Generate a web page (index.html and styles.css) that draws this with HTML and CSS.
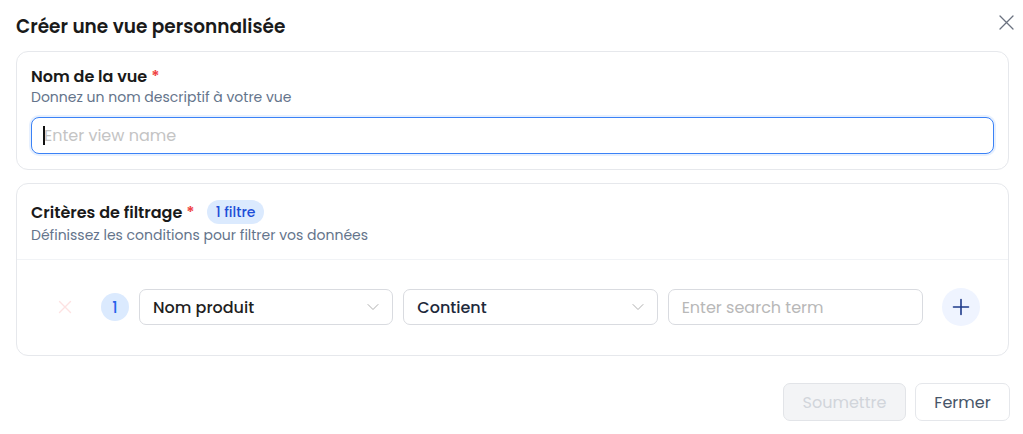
FILE: index.html
```html
<!DOCTYPE html>
<html lang="fr">
<head>
    <meta charset="UTF-8">
    <meta name="viewport" content="width=device-width, initial-scale=1.0">
    <title>Créer une vue personnalisée</title>
    <link rel="stylesheet" href="styles.css">
</head>
<body>
    <div class="dialog">
        <div class="dialog-header">
            <h2>Créer une vue personnalisée</h2>
            <button class="close-btn" aria-label="Fermer">
                <svg width="15" height="15" viewBox="0 0 15 15" fill="none" stroke="#6b7280" stroke-width="1.3" stroke-linecap="round">
                    <path d="M1 1L14 14M14 1L1 14"/>
                </svg>
            </button>
        </div>

        <div class="card">
            <div class="card-head">
                <div class="label">Nom de la vue <span class="req">*</span></div>
                <div class="hint">Donnez un nom descriptif à votre vue</div>
            </div>
            <div class="name-field">
                <span class="caret"></span>
                <input type="text" class="name-input" placeholder="Enter view name">
            </div>
        </div>

        <div class="card filters">
            <div class="card-head">
                <div class="label">Critères de filtrage <span class="req">*</span> <span class="badge">1 filtre</span></div>
                <div class="hint">Définissez les conditions pour filtrer vos données</div>
            </div>
            <div class="filter-body">
                <div class="filter-row">
                    <span class="remove">
                        <svg width="14" height="14" viewBox="0 0 14 14" fill="none" stroke="#fde2e2" stroke-width="1.4" stroke-linecap="round">
                            <path d="M1.5 1.5L12.5 12.5M12.5 1.5L1.5 12.5"/>
                        </svg>
                    </span>
                    <span class="num">1</span>
                    <div class="select">
                        <span class="value">Nom produit</span>
                        <svg width="14" height="14" viewBox="0 0 14 14" fill="none" stroke="#b0b0b0" stroke-width="1" stroke-linecap="round" stroke-linejoin="round">
                            <path d="M2 4.5L7 9.5L12 4.5"/>
                        </svg>
                    </div>
                    <div class="select">
                        <span class="value op">Contient</span>
                        <svg width="14" height="14" viewBox="0 0 14 14" fill="none" stroke="#b0b0b0" stroke-width="1" stroke-linecap="round" stroke-linejoin="round">
                            <path d="M2 4.5L7 9.5L12 4.5"/>
                        </svg>
                    </div>
                    <input type="text" class="term" placeholder="Enter search term">
                    <button class="add-btn" aria-label="Ajouter">
                        <svg width="18" height="18" viewBox="0 0 18 18" fill="none" stroke="#1e3a8a" stroke-width="1.6" stroke-linecap="round">
                            <path d="M9 1.5V16.5M1.5 9H16.5"/>
                        </svg>
                    </button>
                </div>
            </div>
        </div>

        <div class="dialog-footer">
            <button class="btn btn-submit" disabled>Soumettre</button>
            <button class="btn btn-close">Fermer</button>
        </div>
    </div>
</body>
</html>
```

FILE: styles.css
```css
body {
    margin: 0;
    background: #ffffff;
    font-family: "Poppins", Inter, "Noto Sans", sans-serif;
    color: #1f1f1f;
}

.dialog {
    padding: 13px 13px 0 16px;
}

.dialog-header {
    display: flex;
    justify-content: space-between;
    align-items: center;
    height: 26px;
    margin-bottom: 12px;
}

.dialog-header h2 {
    margin: 0;
    font-size: 18.5px;
    font-weight: 600;
    color: #1a1a1a;
}

.close-btn {
    background: none;
    border: none;
    padding: 0;
    width: 15px;
    height: 15px;
    display: flex;
    align-items: center;
    justify-content: center;
    margin-right: -4px;
    margin-top: -8px;
    cursor: pointer;
}

.card {
    border: 1px solid #e6e8ec;
    border-radius: 12px;
    padding: 13px 14px 15px 14px;
    margin-right: 1px;
}

.card-head {
    margin-bottom: 10px;
}

.label {
    font-size: 16px;
    font-weight: 600;
    color: #1a1a1a;
    display: flex;
    align-items: center;
    gap: 4px;
    height: 22px;
}

.req {
    color: #ef4444;
    font-weight: 600;
}

.hint {
    font-size: 14px;
    color: #64748b;
    line-height: 20px;
}

.name-field {
    position: relative;
}

.name-input {
    box-sizing: border-box;
    width: 100%;
    height: 37px;
    border: 1.5px solid #3b82f6;
    border-radius: 8px;
    padding: 0 12px;
    font-family: inherit;
    font-size: 16px;
    outline: none;
    box-shadow: 0 0 0 2px rgba(59, 130, 246, 0.12);
}

.name-input::placeholder {
    color: #c4c4c4;
}

.caret {
    position: absolute;
    left: 12px;
    top: 9px;
    width: 1.5px;
    height: 19px;
    background: #111;
}

.filters {
    margin-top: 13px;
    padding: 0;
}

.filters .card-head {
    padding: 17px 14px 14px 14px;
    margin: 0;
    border-bottom: 1px solid #f1f3f6;
}

.filters .hint {
    margin-top: 2px;
}

.badge {
    margin-left: 8px;
    background: #dbeafe;
    color: #1d4ed8;
    font-size: 14px;
    font-weight: 500;
    border-radius: 12px;
    padding: 2px 9px;
    line-height: 20px;
}

.filter-body {
    padding: 28px 28px 29px 38px;
}

.filter-row {
    display: flex;
    align-items: center;
    gap: 10px;
}

.remove {
    width: 20px;
    display: flex;
    justify-content: center;
    margin-right: 16px;
}

.num {
    width: 28px;
    height: 28px;
    border-radius: 50%;
    background: #dbeafe;
    color: #2563eb;
    font-size: 15px;
    font-weight: 500;
    display: flex;
    align-items: center;
    justify-content: center;
    flex-shrink: 0;
}

.select,
.term {
    box-sizing: border-box;
    flex: 1 1 0;
    min-width: 0;
    height: 36px;
    border: 1px solid #d9dbe0;
    border-radius: 7px;
    font-family: inherit;
    font-size: 16px;
}

.select {
    display: flex;
    align-items: center;
    justify-content: space-between;
    padding: 0 12px 0 13px;
}

.value {
    color: #1f1f1f;
    font-weight: 500;
}

.value.op {
    color: #1e293b;
}

.term {
    padding: 0 13px;
    outline: none;
}

.term::placeholder {
    color: #b8b8b8;
}

.add-btn {
    width: 38px;
    height: 38px;
    border-radius: 50%;
    border: none;
    background: #eff4ff;
    display: flex;
    align-items: center;
    justify-content: center;
    margin-left: 9px;
    flex-shrink: 0;
    cursor: pointer;
}

.dialog-footer {
    display: flex;
    justify-content: flex-end;
    gap: 9px;
    margin-top: 27px;
}

.btn {
    height: 38px;
    border-radius: 7px;
    font-family: inherit;
    font-size: 16px;
    padding: 0 17px;
    cursor: pointer;
}

.btn-submit {
    background: #f3f4f6;
    border: 1px solid #e2e4e8;
    color: #d1d5db;
    width: 123px;
}

.btn-close {
    background: #ffffff;
    border: 1px solid #e5e7eb;
    color: #475569;
    width: 95px;
}
```
